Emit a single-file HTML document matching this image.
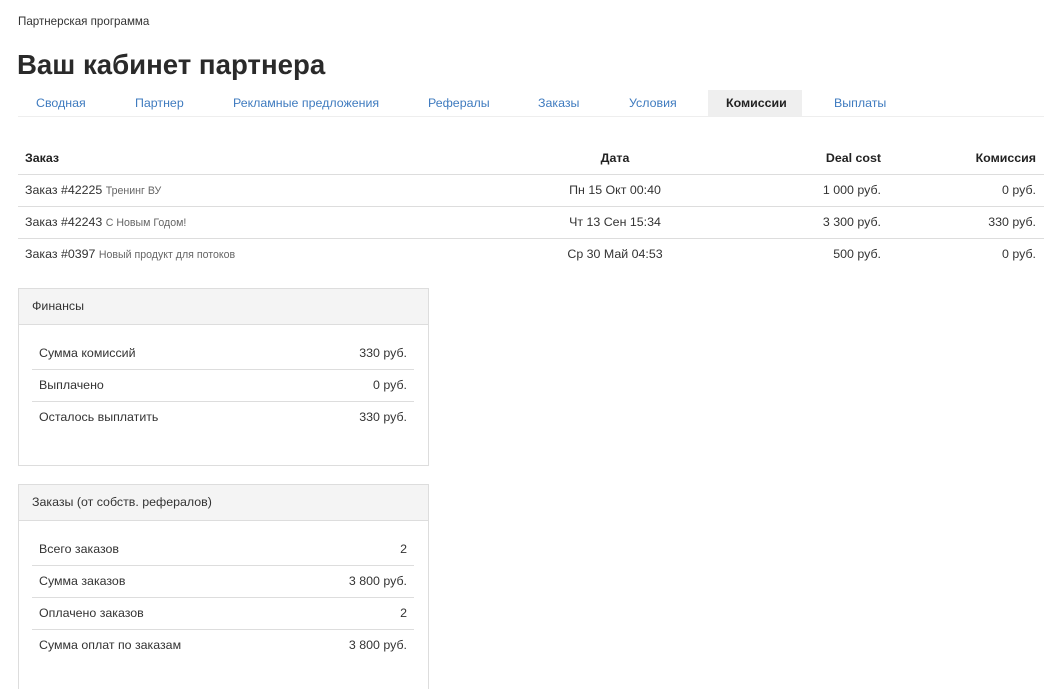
<!DOCTYPE html>
<html><head><meta charset="utf-8"><style>
*{margin:0;padding:0;box-sizing:border-box}
html,body{width:1052px;height:689px;overflow:hidden}
body{background:#fff;font-family:"Liberation Sans",sans-serif;font-size:12.4px;color:#333;position:relative}
.a{position:absolute;white-space:nowrap;line-height:16px}
.r{text-align:right}
.l{color:#3f7bbf}
.b{font-weight:bold;color:#222}
.h{position:absolute;height:1px;background:#ddd}
.s{font-size:10.6px;color:#666}
.p{position:absolute;border:1px solid #ddd;background:#fff}
.ph{position:absolute;left:0;right:0;top:0;height:36px;background:#f4f4f4;border-bottom:1px solid #ddd}
</style></head><body>
<div class="a" style="left:18px;top:14px;font-size:11.6px">Партнерская программа</div>
<div class="a" style="left:17px;top:48px;font-size:27.6px;line-height:34px;font-weight:bold;color:#2a2a2a">Ваш кабинет партнера</div>
<div style="position:absolute;left:708px;top:90px;width:94px;height:26px;background:#efefef"></div>
<div class="a l" style="left:36px;top:95px">Сводная</div>
<div class="a l" style="left:135px;top:95px">Партнер</div>
<div class="a l" style="left:233px;top:95px">Рекламные предложения</div>
<div class="a l" style="left:428px;top:95px">Рефералы</div>
<div class="a l" style="left:538px;top:95px">Заказы</div>
<div class="a l" style="left:629px;top:95px">Условия</div>
<div class="a b" style="left:726px;top:95px">Комиссии</div>
<div class="a l" style="left:834px;top:95px">Выплаты</div>
<div class="h" style="left:18px;width:1026px;top:116px;background:#eee"></div>

<div class="a b" style="left:25px;top:150px">Заказ</div>
<div class="a b" style="left:515px;width:200px;text-align:center;top:150px">Дата</div>
<div class="a b r" style="left:681px;width:200px;top:150px">Deal cost</div>
<div class="a b r" style="left:836px;width:200px;top:150px">Комиссия</div>
<div class="h" style="left:18px;width:1026px;top:174px"></div>

<div class="a" style="left:25px;top:182px">Заказ #42225 <span class="s">Тренинг ВУ</span></div>
<div class="a" style="left:515px;width:200px;text-align:center;top:182px">Пн 15 Окт 00:40</div>
<div class="a r" style="left:681px;width:200px;top:182px">1 000 руб.</div>
<div class="a r" style="left:836px;width:200px;top:182px">0 руб.</div>
<div class="h" style="left:18px;width:1026px;top:206px"></div>

<div class="a" style="left:25px;top:214px">Заказ #42243 <span class="s">С Новым Годом!</span></div>
<div class="a" style="left:515px;width:200px;text-align:center;top:214px">Чт 13 Сен 15:34</div>
<div class="a r" style="left:681px;width:200px;top:214px">3 300 руб.</div>
<div class="a r" style="left:836px;width:200px;top:214px">330 руб.</div>
<div class="h" style="left:18px;width:1026px;top:238px"></div>

<div class="a" style="left:25px;top:246px">Заказ #0397 <span class="s">Новый продукт для потоков</span></div>
<div class="a" style="left:515px;width:200px;text-align:center;top:246px">Ср 30 Май 04:53</div>
<div class="a r" style="left:681px;width:200px;top:246px">500 руб.</div>
<div class="a r" style="left:836px;width:200px;top:246px">0 руб.</div>

<div class="p" style="left:18px;top:288px;width:411px;height:178px"><div class="ph"></div></div>
<div class="a" style="left:32px;top:298px">Финансы</div>
<div class="a" style="left:39px;top:345px">Сумма комиссий</div><div class="a r" style="left:207px;width:200px;top:345px">330 руб.</div>
<div class="h" style="left:32px;width:382px;top:369px"></div>
<div class="a" style="left:39px;top:377px">Выплачено</div><div class="a r" style="left:207px;width:200px;top:377px">0 руб.</div>
<div class="h" style="left:32px;width:382px;top:401px"></div>
<div class="a" style="left:39px;top:409px">Осталось выплатить</div><div class="a r" style="left:207px;width:200px;top:409px">330 руб.</div>

<div class="p" style="left:18px;top:484px;width:411px;height:205px;border-bottom:none"><div class="ph"></div></div>
<div class="a" style="left:32px;top:494px">Заказы (от собств. рефералов)</div>
<div class="a" style="left:39px;top:541px">Всего заказов</div><div class="a r" style="left:207px;width:200px;top:541px">2</div>
<div class="h" style="left:32px;width:382px;top:565px"></div>
<div class="a" style="left:39px;top:573px">Сумма заказов</div><div class="a r" style="left:207px;width:200px;top:573px">3 800 руб.</div>
<div class="h" style="left:32px;width:382px;top:597px"></div>
<div class="a" style="left:39px;top:605px">Оплачено заказов</div><div class="a r" style="left:207px;width:200px;top:605px">2</div>
<div class="h" style="left:32px;width:382px;top:629px"></div>
<div class="a" style="left:39px;top:637px">Сумма оплат по заказам</div><div class="a r" style="left:207px;width:200px;top:637px">3 800 руб.</div>
</body></html>
